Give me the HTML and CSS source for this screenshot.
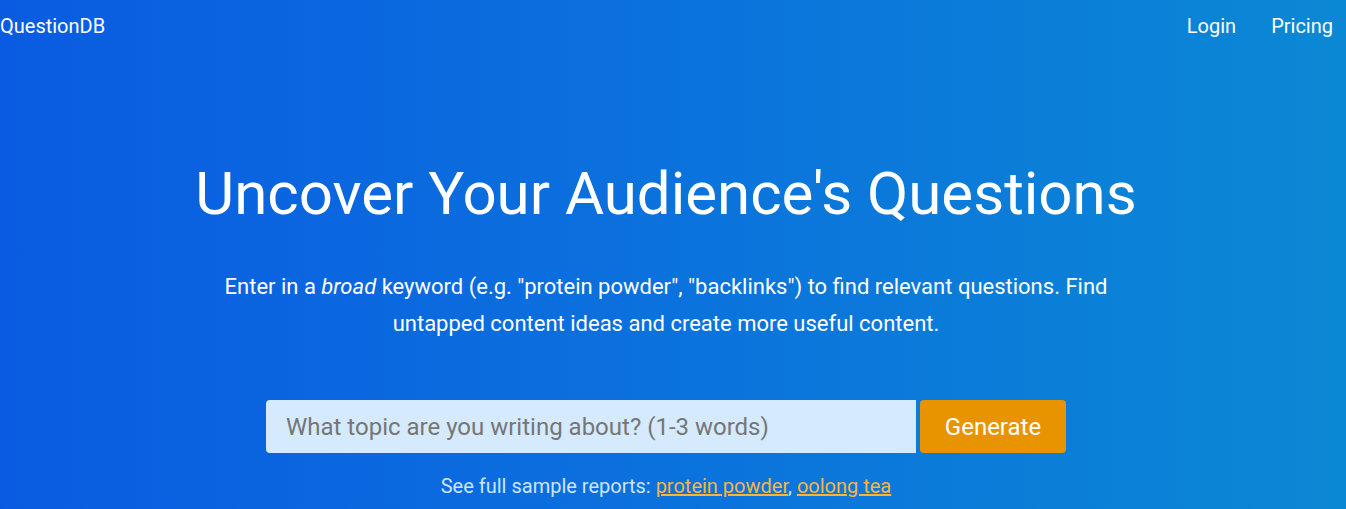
FILE: index.html
```html
<!DOCTYPE html>
<html lang="en">
<head>
<meta charset="utf-8">
<title>QuestionDB</title>
<link rel="stylesheet" href="styles.css">
</head>
<body>
<div class="page">
  <header class="nav">
    <a class="brand" href="#">QuestionDB</a>
    <nav class="links">
      <a href="#">Login</a>
      <a href="#">Pricing</a>
    </nav>
  </header>
  <main class="hero">
    <h1 class="title">Uncover Your Audience's Questions</h1>
    <p class="lead">Enter in a <em>broad</em> keyword (e.g. "protein powder", "backlinks") to find relevant questions. Find untapped content ideas and create more useful content.</p>
    <form class="search">
      <input class="input" type="text" placeholder="What topic are you writing about? (1-3 words)">
      <button class="btn" type="button">Generate</button>
    </form>
    <p class="samples">See full sample reports: <a href="#">protein powder</a>, <a href="#">oolong tea</a></p>
  </main>
</div>
</body>
</html>
```

FILE: styles.css
```css
html, body {
  margin: 0;
  padding: 0;
  height: 100%;
}
body {
  font-family: Roboto, "Liberation Sans", Arial, sans-serif;
  color: #fff;
  background: linear-gradient(90deg, #0a5be1 0%, #0b72dd 50%, #0b88d4 100%);
  overflow: hidden;
}
a { color: inherit; text-decoration: none; }
.page {
  min-height: 509px;
}
.nav {
  display: flex;
  justify-content: space-between;
  align-items: center;
  height: 52px;
}
.brand {
  font-size: 20px;
}
.links {
  display: flex;
  gap: 35px;
  padding-right: 13px;
}
.links a {
  font-size: 20px;
}
.hero {
  display: flex;
  flex-direction: column;
  align-items: center;
  text-align: center;
  padding-top: 107px;
  padding-right: 14px;
}
.title {
  margin: 0;
  font-weight: 400;
  font-size: 60px;
  line-height: 70px;
}
.lead {
  margin: 39px 0 0;
  max-width: 900px;
  font-size: 22px;
  line-height: 37px;
}
.lead em { font-style: italic; }
.search {
  display: flex;
  gap: 4px;
  margin-top: 58px;
}
.input {
  width: 650px;
  height: 53px;
  box-sizing: border-box;
  border: none;
  border-radius: 4px 0 0 4px;
  background: #d5eafd;
  padding: 0 20px;
  font-family: inherit;
  font-size: 24px;
  color: #333;
  outline: none;
}
.input::placeholder { color: #767676; }
.btn {
  width: 146px;
  height: 53px;
  border: none;
  border-radius: 4px;
  background: #e89400;
  color: #fff;
  font-family: inherit;
  font-size: 24px;
  cursor: pointer;
}
.samples {
  margin: 21px 0 0;
  font-size: 20px;
  color: #cfe4fc;
}
.samples a {
  color: #f7b53e;
  text-decoration: underline;
}
```
